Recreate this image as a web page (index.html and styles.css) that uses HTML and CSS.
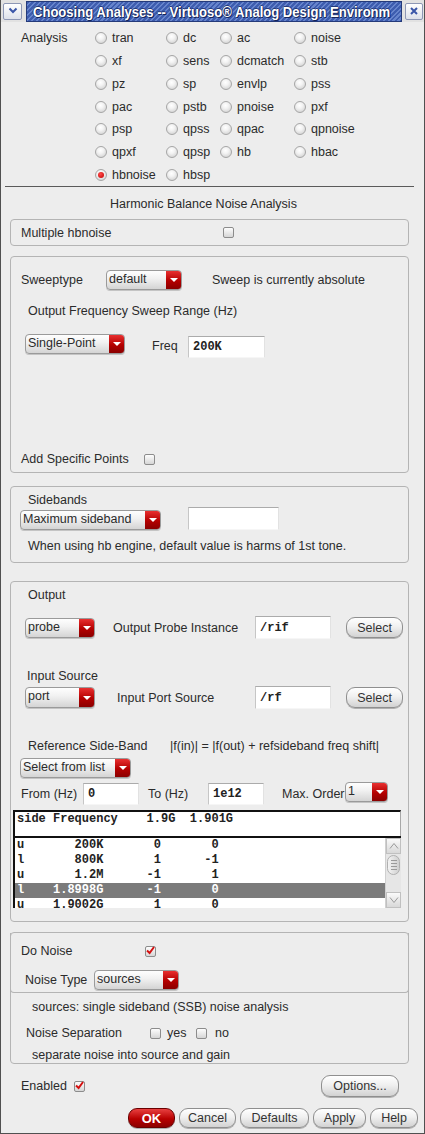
FILE: index.html
```html
<!DOCTYPE html>
<html lang="en">
<head>
<meta charset="utf-8">
<title>Choosing Analyses</title>
<link rel="stylesheet" href="styles.css">
</head>
<body>
<div class="window">
  <div class="titlebar">
    <div class="tbtn tbtn-left"><svg width="12" height="10" viewBox="0 0 12 10"><path d="M2.5 2.5 L6 6 L9.5 2.5" fill="none" stroke="#3a56a8" stroke-width="2"/></svg></div>
    <div class="title"><span class="title-text">Choosing Analyses -- Virtuoso® Analog Design Environm</span></div>
    <div class="tbtn tbtn-close"><svg width="10" height="10" viewBox="0 0 10 10"><path d="M2 2 L8 8 M8 2 L2 8" stroke="#3a56a8" stroke-width="2"/></svg></div>
  </div>
  <div class="content">
    <div class="analysis">
      <div class="alabel">Analysis</div>
      <div class="opt"><span class="radio"></span>tran</div>
      <div class="opt"><span class="radio"></span>dc</div>
      <div class="opt"><span class="radio"></span>ac</div>
      <div class="opt"><span class="radio"></span>noise</div>
      <div class="opt"><span class="radio"></span>xf</div>
      <div class="opt"><span class="radio"></span>sens</div>
      <div class="opt"><span class="radio"></span>dcmatch</div>
      <div class="opt"><span class="radio"></span>stb</div>
      <div class="opt"><span class="radio"></span>pz</div>
      <div class="opt"><span class="radio"></span>sp</div>
      <div class="opt"><span class="radio"></span>envlp</div>
      <div class="opt"><span class="radio"></span>pss</div>
      <div class="opt"><span class="radio"></span>pac</div>
      <div class="opt"><span class="radio"></span>pstb</div>
      <div class="opt"><span class="radio"></span>pnoise</div>
      <div class="opt"><span class="radio"></span>pxf</div>
      <div class="opt"><span class="radio"></span>psp</div>
      <div class="opt"><span class="radio"></span>qpss</div>
      <div class="opt"><span class="radio"></span>qpac</div>
      <div class="opt"><span class="radio"></span>qpnoise</div>
      <div class="opt"><span class="radio"></span>qpxf</div>
      <div class="opt"><span class="radio"></span>qpsp</div>
      <div class="opt"><span class="radio"></span>hb</div>
      <div class="opt"><span class="radio"></span>hbac</div>
      <div class="opt"><span class="radio on"></span>hbnoise</div>
      <div class="opt"><span class="radio"></span>hbsp</div>
    </div>
    <div class="sep"></div>
    <div class="heading">Harmonic Balance Noise Analysis</div>

    <div class="box box-multi">
      <span class="lbl w-multi">Multiple hbnoise</span><span class="cb"></span>
    </div>

    <div class="box box-sweep">
      <div class="row r-sweeptype">
        <span class="lbl w-sweeptype">Sweeptype</span>
        <div class="dd w-default"><span class="v">default</span><span class="arr"></span></div>
        <span class="lbl ml-abs">Sweep is currently absolute</span>
      </div>
      <div class="line t-range">Output Frequency Sweep Range (Hz)</div>
      <div class="row r-freq">
        <div class="dd w-single"><span class="v">Single-Point</span><span class="arr"></span></div>
        <span class="lbl w-freq">Freq</span>
        <div class="inp w-freqinp">200K</div>
      </div>
      <div class="row r-addpts"><span class="lbl w-addpts">Add Specific Points</span><span class="cb"></span></div>
    </div>

    <div class="box box-side">
      <div class="line t-side">Sidebands</div>
      <div class="row r-side">
        <div class="dd w-maxside"><span class="v">Maximum sideband</span><span class="arr"></span></div>
        <div class="inp w-sideinp"></div>
      </div>
      <div class="line t-when">When using hb engine, default value is harms of 1st tone.</div>
    </div>

    <div class="box box-out">
      <div class="line t-output">Output</div>
      <div class="row r-probe">
        <div class="dd w-probe"><span class="v">probe</span><span class="arr"></span></div>
        <span class="lbl w-opi">Output Probe Instance</span>
        <div class="inp w-inst">/rif</div>
        <div class="btn w-select">Select</div>
      </div>
      <div class="line t-insrc">Input Source</div>
      <div class="row r-port">
        <div class="dd w-port"><span class="v">port</span><span class="arr"></span></div>
        <span class="lbl w-ips">Input Port Source</span>
        <div class="inp w-inst">/rf</div>
        <div class="btn w-select">Select</div>
      </div>
      <div class="row r-ref">
        <span class="lbl w-ref">Reference Side-Band</span>
        <span class="lbl">|f(in)| = |f(out) + refsideband freq shift|</span>
      </div>
      <div class="dd w-sellist"><span class="v">Select from list</span><span class="arr"></span></div>
      <div class="row r-range">
        <span class="lbl w-from">From (Hz)</span>
        <div class="inp w-hz">0</div>
        <span class="lbl w-to">To (Hz)</span>
        <div class="inp w-hz">1e12</div>
        <span class="lbl w-max">Max. Order</span>
        <div class="dd w-order"><span class="v">1</span><span class="arr"></span></div>
      </div>
      <div class="lhead">side Frequency    1.9G  1.901G</div>
      <div class="list">
        <div class="lrows">
          <div class="lrow">u       200K       0       0</div>
          <div class="lrow">l       800K       1      -1</div>
          <div class="lrow">u       1.2M      -1       1</div>
          <div class="lrow sel">l    1.8998G      -1       0</div>
          <div class="lrow">u    1.9002G       1       0</div>
        </div>
        <div class="sb">
          <div class="sb-btn"><svg width="10" height="8" viewBox="0 0 10 8"><path d="M1 6.5 L5 1.5 L9 6.5" fill="none" stroke="#9a9a9a" stroke-width="1"/></svg></div>
          <div class="sb-thumb"><span></span><span></span><span></span><span></span></div>
          <div class="sb-track"></div>
          <div class="sb-btn"><svg width="10" height="8" viewBox="0 0 10 8"><path d="M1 1.5 L5 6.5 L9 1.5" fill="none" stroke="#9a9a9a" stroke-width="1"/></svg></div>
        </div>
      </div>
    </div>

    <div class="box box-noise">
      <div class="ninner">
        <div class="row r-donoise"><span class="lbl w-donoise">Do Noise</span><span class="cb on"><svg width="9" height="9" viewBox="0 0 9 9"><path d="M1 4.5 L3.6 7 L8 1" fill="none" stroke="#d41010" stroke-width="2"/></svg></span></div>
        <div class="row r-ntype">
          <span class="lbl w-ntype">Noise Type</span>
          <div class="dd w-sources"><span class="v">sources</span><span class="arr"></span></div>
        </div>
      </div>
      <div class="line t-sources">sources: single sideband (SSB) noise analysis</div>
      <div class="row r-nsep">
        <span class="lbl w-nsep">Noise Separation</span>
        <span class="cb"></span><span class="lbl w-yes">yes</span>
        <span class="cb"></span><span class="lbl w-no">no</span>
      </div>
      <div class="line t-separate">separate noise into source and gain</div>
    </div>

    <div class="row r-enabled">
      <span class="lbl w-enabled">Enabled</span>
      <span class="cb on"><svg width="9" height="9" viewBox="0 0 9 9"><path d="M1 4.5 L3.6 7 L8 1" fill="none" stroke="#d41010" stroke-width="2"/></svg></span>
      <div class="btn w-options">Options...</div>
    </div>

    <div class="row r-actions">
      <div class="btn btn-ok w-ok">OK</div>
      <div class="btn w-cancel">Cancel</div>
      <div class="btn w-defaults">Defaults</div>
      <div class="btn w-apply">Apply</div>
      <div class="btn w-help">Help</div>
    </div>
  </div>
</div>
</body>
</html>
```

FILE: styles.css
```css
* { box-sizing: border-box; }
body {
  margin: 0;
  background: #ededed;
  font-family: "Liberation Sans", Arial, sans-serif;
  font-size: 12.5px;
  color: #2b2b2b;
}
.window {
  width: 425px;
  height: 1134px;
  border: 1px solid #505050;
  border-top: 0;
  background: #ededed;
  overflow: hidden;
  display: flex;
  flex-direction: column;
}
.titlebar {
  height: 22px;
  flex: none;
  display: flex;
  align-items: center;
  padding-left: 2px;
  background: #e2e2e2;
}
.tbtn {
  flex: none;
  width: 19px;
  height: 17px;
  border: 1px solid #8d97b5;
  border-radius: 2px;
  background: linear-gradient(#ffffff, #dde1ea);
  display: flex;
  align-items: center;
  justify-content: center;
}
.tbtn-close { width: 18px; }
.title {
  flex: none;
  width: 376px;
  height: 21px;
  margin: 0 3px 0 4px;
  border: 1px solid #243a7a;
  background: repeating-linear-gradient(135deg, #3e5daf 0 2px, #6684cc 2px 3.5px);
  padding-left: 6px;
  white-space: nowrap;
  overflow: hidden;
}
.title-text {
  display: inline-block;
  color: #ffffff;
  font-family: "Liberation Sans", Arial, sans-serif;
  font-weight: bold;
  font-size: 15px;
  line-height: 19px;
  transform: scaleX(0.87);
  transform-origin: left center;
  text-shadow: 1px 1px 0 #14245a, -1px 0 0 #243a7a, 0 -1px 0 #243a7a, 1px 0 0 #243a7a;
}
.content {
  flex: 1;
  display: flex;
  flex-direction: column;
}
.analysis {
  display: grid;
  grid-template-columns: 94px 71px 54px 74px 1fr;
  grid-auto-rows: 22.75px;
  margin-top: 5px;
  flex: none;
}
.alabel {
  grid-row: 1 / span 7;
  padding-left: 20px;
  line-height: 22.75px;
}
.opt {
  display: flex;
  align-items: center;
  gap: 5px;
  white-space: nowrap;
}
.radio {
  flex: none;
  width: 12px;
  height: 12px;
  border-radius: 50%;
  border: 1px solid #a6a6a6;
  background: radial-gradient(circle at 45% 35%, #ffffff 0, #f3f3f3 35%, #c9c9c9 100%);
  display: flex;
  align-items: center;
  justify-content: center;
}
.radio.on::after {
  content: "";
  width: 6px;
  height: 6px;
  border-radius: 50%;
  background: radial-gradient(circle at 40% 35%, #ff4a4a, #c00000);
}
.sep {
  flex: none;
  height: 1px;
  width: 409px;
  margin-left: 4px;
  background: #5a5a5a;
}
.heading {
  margin-top: 9px;
  margin-left: 109px;
  line-height: 16px;
}
.box {
  flex: none;
  margin-left: 9px;
  width: 399px;
  border: 1px solid #b4b4b4;
  border-radius: 4px;
  display: flex;
  flex-direction: column;
}
.row { display: flex; align-items: center; flex: none; }
.line { line-height: 16px; height: 16px; white-space: nowrap; flex: none; }
.lbl { white-space: nowrap; flex: none; }

.cb {
  flex: none;
  width: 11px;
  height: 11px;
  border: 1px solid #8c8c8c;
  border-radius: 2px;
  background: linear-gradient(#fdfdfd, #d6d6d6);
  display: flex;
  align-items: center;
  justify-content: center;
}
.cb svg { margin-top: -1px; }

.dd {
  flex: none;
  display: flex;
  height: 20px;
  border: 1px solid #9a9a9a;
  border-radius: 4px;
  background: linear-gradient(#fefefe, #f2f2f2 40%, #d4d4d4);
  overflow: hidden;
  box-shadow: 0 1px 0 #c4c4c4;
}
.dd .v {
  flex: 1;
  padding-left: 2px;
  line-height: 16px;
  white-space: nowrap;
  overflow: hidden;
}
.dd .arr {
  flex: none;
  width: 15px;
  background: linear-gradient(#e83030, #b40000 55%, #8a0000);
  display: flex;
  align-items: center;
  justify-content: center;
}
.dd .arr::after {
  content: "";
  border-left: 4px solid transparent;
  border-right: 4px solid transparent;
  border-top: 4px solid #ffffff;
}
.inp {
  flex: none;
  background: #ffffff;
  border-top: 1px solid #ababab;
  border-left: 1px solid #c6c6c6;
  border-right: 1px solid #e2e2e2;
  border-bottom: 1px solid #f6f6f6;
  font-family: "Liberation Mono", "Courier New", monospace;
  font-weight: bold;
  font-size: 12px;
  color: #222;
  padding-left: 4px;
  display: flex;
  align-items: center;
}
.btn {
  flex: none;
  height: 21px;
  border: 1px solid #8f8f8f;
  border-radius: 9px;
  background: linear-gradient(#ffffff, #f0f0f0 45%, #d2d2d2);
  box-shadow: 0 1px 0 #b0b0b0;
  display: flex;
  align-items: center;
  justify-content: center;
  color: #333;
  white-space: nowrap;
}
.btn-ok {
  background: linear-gradient(#e84040, #b80000 55%, #8c0000);
  border-color: #6a0000;
  color: #ffffff;
  font-weight: bold;
  font-size: 13px;
}

/* multi */
.box-multi { margin-top: 7px; height: 27px; flex-direction: row; align-items: center; }
.w-multi { margin-left: 10px; width: 202px; }

/* sweep */
.box-sweep { margin-top: 10px; height: 217px; }
.r-sweeptype { margin-top: 12px; height: 21px; }
.w-sweeptype { margin-left: 10px; width: 85px; }
.w-default { width: 76px; }
.ml-abs { margin-left: 30px; }
.t-range { margin-top: 13px; margin-left: 17px; }
.r-freq { margin-top: 15px; height: 24px; align-items: flex-start; }
.w-single { margin-left: 14px; width: 100px; }
.w-freq { margin-left: 27px; width: 36px; margin-top: 4px; line-height: 16px; }
.w-freqinp { width: 77px; height: 22px; margin-top: 2px; }
.r-addpts { margin-top: 93px; height: 16px; }
.w-addpts { margin-left: 10px; width: 123px; }

/* sidebands */
.box-side { margin-top: 13px; height: 77px; }
.t-side { margin-top: 6px; margin-left: 17px; line-height: 14px; height: 14px; }
.r-side { height: 23px; align-items: flex-end; }
.w-maxside { margin-left: 9px; width: 141px; }
.w-sideinp { margin-left: 27px; width: 91px; height: 23px; }
.t-when { margin-top: 8px; margin-left: 17px; }

/* output */
.box-out { margin-top: 18px; height: 341px; }
.t-output { margin-top: 5px; margin-left: 17px; }
.r-probe { margin-top: 13px; height: 23px; }
.w-probe, .w-port { margin-left: 14px; width: 70px; }
.w-opi { margin-left: 18px; width: 142px; }
.w-ips { margin-left: 22px; width: 138px; }
.w-inst { width: 76px; height: 23px; }
.w-select { margin-left: 15px; width: 57px; }
.t-insrc { margin-top: 29px; margin-left: 16px; }
.r-port { margin-top: 2px; height: 23px; }
.r-port .dd { height: 21px; }
.r-ref { margin-top: 29px; height: 16px; }
.w-ref { margin-left: 17px; width: 142px; }
.w-sellist { margin-top: 4px; margin-left: 9px; width: 111px; }
.r-range { margin-top: 4px; height: 24px; }
.w-from { margin-left: 10px; width: 62px; }
.w-hz { width: 56px; height: 22px; }
.w-to { margin-left: 9px; width: 60px; }
.w-max { margin-left: 18px; width: 63px; }
.w-order { width: 43px; align-self: flex-start; }
.lhead {
  flex: none;
  margin-top: 4px;
  margin-left: 2px;
  width: 388px;
  height: 26px;
  background: #ffffff;
  border-top: 2px solid #111;
  border-left: 2px solid #111;
  border-right: 1px solid #a8a8a8;
  padding-left: 2px;
  font-family: "Liberation Mono", "Courier New", monospace;
  font-weight: bold;
  font-size: 12px;
  line-height: 15px;
  white-space: pre;
  color: #222;
}
.list {
  flex: none;
  margin-left: 2px;
  width: 388px;
  height: 72px;
  background: #ffffff;
  border-top: 2px solid #111;
  border-left: 2px solid #111;
  display: flex;
}
.lrows { flex: 1; overflow: hidden; }
.lrow {
  height: 15px;
  line-height: 15px;
  padding-left: 2px;
  white-space: pre;
  font-family: "Liberation Mono", "Courier New", monospace;
  font-weight: bold;
  font-size: 12px;
  color: #222;
}
.lrow.sel { background: #7b7b7b; color: #ffffff; }
.sb {
  flex: none;
  width: 16px;
  display: flex;
  flex-direction: column;
  background: #e6e6e6;
  border-left: 1px solid #d0d0d0;
}
.sb-btn {
  flex: none;
  height: 16px;
  background: linear-gradient(#fafafa, #d8d8d8);
  border: 1px solid #c0c0c0;
  display: flex;
  align-items: center;
  justify-content: center;
}
.sb-thumb {
  flex: none;
  height: 20px;
  margin: 1px 1px 0;
  border: 1px solid #b0b0b0;
  border-radius: 7px;
  background: linear-gradient(90deg, #f4f4f4, #cfcfcf);
  display: flex;
  flex-direction: column;
  align-items: center;
  justify-content: center;
  gap: 2px;
}
.sb-thumb span { width: 6px; height: 1px; background: #9a9a9a; }
.sb-track { flex: 1; }

/* noise */
.box-noise { margin-top: 10px; height: 132px; }
.ninner {
  flex: none;
  height: 60px;
  margin: 0 -1px;
  border-bottom: 1px solid #b4b4b4;
  border-left: 1px solid #b4b4b4;
  border-right: 1px solid #b4b4b4;
  border-radius: 0 0 4px 4px;
  display: flex;
  flex-direction: column;
}
.r-donoise { margin-top: 10px; height: 16px; }
.w-donoise { margin-left: 10px; width: 124px; }
.r-ntype { margin-top: 11px; height: 20px; }
.w-ntype { margin-left: 14px; width: 69px; }
.w-sources { width: 85px; }
.t-sources { margin-top: 6px; margin-left: 21px; }
.r-nsep { margin-top: 10px; height: 16px; }
.w-nsep { margin-left: 15px; width: 124px; }
.w-yes { margin-left: 6px; width: 29px; }
.w-no { margin-left: 8px; }
.t-separate { margin-top: 7px; margin-left: 21px; line-height: 14px; height: 14px; }

/* bottom */
.r-enabled { margin-top: 11px; height: 22px; }
.w-enabled { margin-left: 20px; width: 53px; }
.w-options { margin-left: auto; margin-right: 25px; width: 78px; height: 22px; }
.r-actions { margin-top: 11px; height: 20px; justify-content: flex-end; gap: 4px; padding-right: 6px; }
.r-actions .btn { height: 20px; }
.w-ok { width: 47px; }
.w-cancel { width: 57px; }
.w-defaults { width: 69px; }
.w-apply { width: 53px; }
.w-help { width: 48px; }
```
